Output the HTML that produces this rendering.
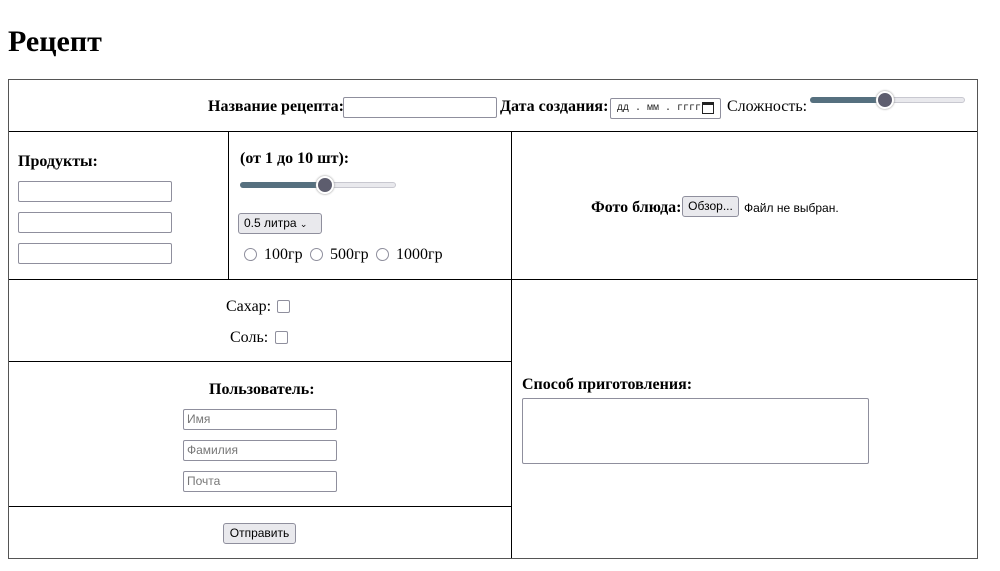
<!DOCTYPE html>
<html><head><meta charset="utf-8"><style>
*{box-sizing:border-box}
body{margin:0;width:1000px;height:571px;background:#fff;font-family:"Liberation Serif","DejaVu Serif",serif;font-size:16px;color:#000;position:relative;overflow:hidden}
.a{position:absolute;white-space:nowrap}
.b{font-weight:bold}
.ln{position:absolute;background:#000}
.in{position:absolute;border:1px solid #8f8f9d;border-radius:2px;background:#fff;height:21px;font-family:"Liberation Sans","DejaVu Sans",sans-serif;font-size:12px;color:#777;padding:3px 3px;line-height:13px;white-space:nowrap;overflow:hidden}
.btn{position:absolute;border:1px solid #8f8f9d;border-radius:3px;background:#e9e9ed;font-family:"Liberation Sans","DejaVu Sans",sans-serif;font-size:12px;color:#000;text-align:center;line-height:19px;height:21px;white-space:nowrap}
.cb{position:absolute;width:13px;height:13px;border:1px solid #8f8f9d;border-radius:2px;background:#fff}
.rd{position:absolute;width:13px;height:13px;border:1px solid #8f8f9d;border-radius:50%;background:#fff}
.sl{position:absolute;height:6px;border-radius:3px;background:#e9e9ed;border:1px solid #c8c8d0}
.slf{position:absolute;height:6px;border-radius:3px;background:#56707f}
.th{position:absolute;width:18px;height:18px;border-radius:50%;background:#5d5d6e;border:2px solid #fff;box-shadow:0 0 2px #888}
</style></head><body>
<div class="a b" style="left:8px;top:25px;font-size:30px">Рецепт</div>
<div style="position:absolute;left:8px;top:79px;width:970px;height:480px;border:1px solid #555"></div>
<div class="ln" style="left:9px;top:131px;width:968px;height:1px"></div>
<div class="ln" style="left:9px;top:279px;width:968px;height:1px"></div>
<div class="ln" style="left:9px;top:361px;width:502px;height:1px"></div>
<div class="ln" style="left:9px;top:506px;width:502px;height:1px"></div>
<div class="ln" style="left:228px;top:132px;width:1px;height:148px"></div>
<div class="ln" style="left:511px;top:132px;width:1px;height:426px"></div>

<div class="a b" style="left:208px;top:98px">Название рецепта:</div>
<div class="in" style="left:343px;top:97px;width:154px"></div>
<div class="a b" style="left:500px;top:98px">Дата создания:</div>
<div class="in" style="left:610px;top:98px;width:111px;font-family:'Liberation Mono',monospace;font-size:10px;color:#222;padding-left:6px">дд . мм . гггг</div>
<div style="position:absolute;left:702px;top:102px;width:12px;height:12px;border:1.5px solid #222;border-top-width:3px"></div>
<div class="a" style="left:727px;top:98px">Сложность:</div>
<div class="sl" style="left:810px;top:97px;width:155px"></div>
<div class="slf" style="left:810px;top:97px;width:76px"></div>
<div class="th" style="left:876px;top:91px"></div>

<div class="a b" style="left:18px;top:153px">Продукты:</div>
<div class="in" style="left:18px;top:181px;width:154px"></div>
<div class="in" style="left:18px;top:212px;width:154px"></div>
<div class="in" style="left:18px;top:243px;width:154px"></div>
<div class="a b" style="left:240px;top:150px">(от 1 до 10 шт):</div>
<div class="sl" style="left:240px;top:182px;width:156px"></div>
<div class="slf" style="left:240px;top:182px;width:85px"></div>
<div class="th" style="left:316px;top:176px"></div>
<div class="btn" style="left:238px;top:213px;width:84px;text-align:left;padding-left:5px">0.5 литра <span style="font-size:9px">&#8964;</span></div>
<div class="rd" style="left:244px;top:248px"></div>
<div class="a" style="left:264px;top:246px">100гр</div>
<div class="rd" style="left:310px;top:248px"></div>
<div class="a" style="left:330px;top:246px">500гр</div>
<div class="rd" style="left:376px;top:248px"></div>
<div class="a" style="left:396px;top:246px">1000гр</div>

<div class="a b" style="left:591px;top:199px">Фото блюда:</div>
<div class="btn" style="left:682px;top:196px;width:57px">Обзор...</div>
<div class="a" style="left:744px;top:201px;font-family:'Liberation Sans',sans-serif;font-size:12px">Файл не выбран.</div>

<div class="a" style="left:226px;top:298px">Сахар:</div>
<div class="cb" style="left:277px;top:300px"></div>
<div class="a" style="left:230px;top:329px">Соль:</div>
<div class="cb" style="left:275px;top:331px"></div>

<div class="a b" style="left:209px;top:381px">Пользователь:</div>
<div class="in" style="left:183px;top:409px;width:154px">Имя</div>
<div class="in" style="left:183px;top:440px;width:154px">Фамилия</div>
<div class="in" style="left:183px;top:471px;width:154px">Почта</div>
<div class="btn" style="left:223px;top:523px;width:73px">Отправить</div>

<div class="a b" style="left:522px;top:376px">Способ приготовления:</div>
<div class="in" style="left:522px;top:398px;width:347px;height:66px"></div>
</body></html>
